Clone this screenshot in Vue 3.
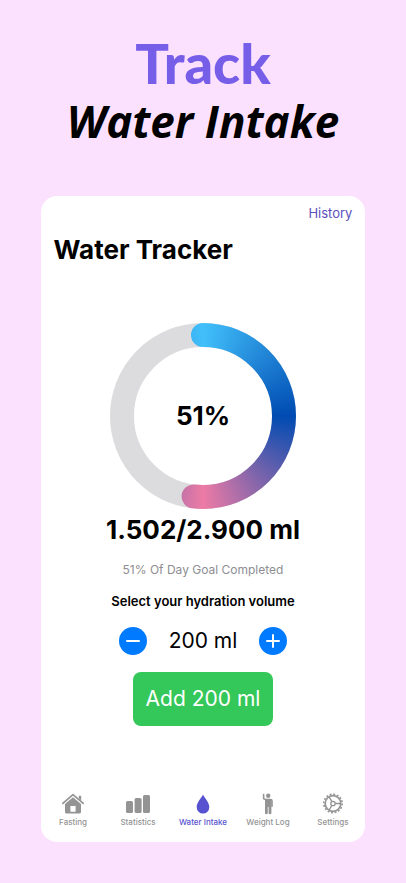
<!-- WaterTracker -->
<template>
  <main class="page">
    <h1 class="headline">
      <span class="headline-top">Track</span>
      <span class="headline-bottom">Water Intake</span>
    </h1>

    <section class="card">
      <header class="card-header">
        <a href="#history" class="history">History</a>
        <h2 class="title">Water Tracker</h2>
      </header>

      <div class="tracker">
        <div class="ring">
          <svg viewBox="0 0 186 186" class="ring-svg" aria-hidden="true">
            <defs>
              <mask id="ring-mask" maskUnits="userSpaceOnUse" x="0" y="0" width="186" height="186">
                <circle
                  cx="93" cy="93" :r="radius" fill="none" stroke="#fff" stroke-width="24"
                  stroke-linecap="round" :stroke-dasharray="dash" transform="rotate(-90 93 93)"
                />
              </mask>
            </defs>
            <circle cx="93" cy="93" :r="radius" fill="none" stroke="#dcdcde" stroke-width="24" />
            <g mask="url(#ring-mask)">
              <foreignObject x="0" y="0" width="186" height="186">
                <div class="ring-color"></div>
              </foreignObject>
            </g>
          </svg>
          <span class="percent">{{ percent }}%</span>
        </div>

        <p class="amount">{{ format(current) }}/{{ format(goal) }} ml</p>
        <p class="completed">{{ percent }}% Of Day Goal Completed</p>
        <p class="select-label">Select your hydration volume</p>

        <div class="stepper">
          <button type="button" class="round" aria-label="Less" @click="decrease">
            <svg viewBox="0 0 28 28"><path d="M8 14h12" /></svg>
          </button>
          <span class="volume">{{ volume }} ml</span>
          <button type="button" class="round" aria-label="More" @click="increase">
            <svg viewBox="0 0 28 28"><path d="M8 14h12M14 8v12" /></svg>
          </button>
        </div>

        <button type="button" class="add" @click="add">Add {{ volume }} ml</button>
      </div>

      <nav class="tabs">
        <a
          v-for="tab in tabs" :key="tab.id" :href="'#' + tab.id"
          class="tab" :class="{ active: tab.id === activeTab }" @click.prevent="activeTab = tab.id"
        >
          <svg v-if="tab.id === 'fasting'" viewBox="0 0 24 22" class="icon">
            <path d="M1.8 10.4 12 1.6l10.2 8.8" fill="none" stroke="currentColor" stroke-width="1.7" stroke-linecap="round" stroke-linejoin="round" />
            <path d="M17.8 2.8h2.4v4.8l-2.4-2z" fill="currentColor" />
            <path fill-rule="evenodd" d="M12 4.2 20 11V19q0 1.6-1.6 1.6H5.6Q4 20.6 4 19v-8zM9.4 13v5.8h5.2V13z" fill="currentColor" />
          </svg>
          <svg v-else-if="tab.id === 'statistics'" viewBox="0 0 24 22" class="icon">
            <rect x="0" y="8" width="7" height="12" rx="1.6" fill="currentColor" />
            <rect x="8.6" y="5" width="7" height="15" rx="1.6" fill="currentColor" />
            <rect x="17" y="2" width="7" height="18" rx="1.6" fill="currentColor" />
          </svg>
          <svg v-else-if="tab.id === 'water'" viewBox="0 0 24 22" class="icon">
            <path d="M12 1.4c1.2 3 6.3 7.4 6.3 12.8a6.3 6.3 0 0 1-12.6 0C5.7 8.8 10.8 4.4 12 1.4z" fill="currentColor" />
          </svg>
          <svg v-else-if="tab.id === 'weight'" viewBox="0 0 24 22" class="icon">
            <circle cx="12.2" cy="2.7" r="2.2" fill="currentColor" />
            <path d="M7.6 1.6v3.6q0 .9 1.3 1.1l1.6.3h4.2q1.3 0 1.3 1.4v5.2" fill="none" stroke="currentColor" stroke-width="1.6" stroke-linecap="round" stroke-linejoin="round" />
            <path d="M9 6h6.4v14.1q0 1.2-1.4 1.2t-1.4-1.2v-6h-.8v6q0 1.2-1.4 1.2T9 20.1z" fill="currentColor" />
          </svg>
          <svg v-else viewBox="0 0 24 22" class="icon">
            <circle cx="12" cy="10.5" r="7.8" fill="none" stroke="currentColor" stroke-width="1.7" />
            <circle cx="12" cy="10.5" r="9.2" fill="none" stroke="currentColor" stroke-width="1.6" stroke-dasharray="1.9 1.713" />
            <circle cx="12" cy="10.5" r="2.2" fill="none" stroke="currentColor" stroke-width="1.3" />
            <path d="M14.2 10.5h5.6M10.9 8.6 8.1 3.8M10.9 12.4l-2.8 4.8" stroke="currentColor" stroke-width="1.3" />
          </svg>
          <span>{{ tab.label }}</span>
        </a>
      </nav>
    </section>
  </main>
</template>

<script setup>
import { ref, computed } from 'vue'

const current = ref(1502)
const goal = 2900
const volume = ref(200)
const activeTab = ref('water')

const tabs = [
  { id: 'fasting', label: 'Fasting' },
  { id: 'statistics', label: 'Statistics' },
  { id: 'water', label: 'Water Intake' },
  { id: 'weight', label: 'Weight Log' },
  { id: 'settings', label: 'Settings' }
]

const radius = 81
const progress = computed(() => Math.min(current.value / goal, 1))
const percent = computed(() => Math.floor(progress.value * 100))
const dash = computed(() => {
  const length = 2 * Math.PI * radius
  return `${length * progress.value} ${length}`
})

const format = (n) => String(n).replace(/\B(?=(\d{3})+$)/g, '.')

const decrease = () => {
  volume.value = Math.max(50, volume.value - 50)
}
const increase = () => {
  volume.value += 50
}
const add = () => {
  current.value += volume.value
}
</script>

<style>
body {
  margin: 0;
  background-color: #fce1ff;
}
</style>

<style scoped>
.page {
  box-sizing: border-box;
  min-height: 100vh;
  padding: 34px 10% 41px;
  display: flex;
  flex-direction: column;
  background-color: #fce1ff;
  font-family: Inter, "Liberation Sans", sans-serif;
  color: #000;
}
h1, h2, p {
  margin: 0;
}
.headline {
  display: flex;
  flex-direction: column;
  align-items: center;
  margin-bottom: 46px;
  white-space: nowrap;
}
.headline-top {
  font-family: Lato, sans-serif;
  font-weight: 900;
  font-size: 56px;
  line-height: 58px;
  color: #775ee8;
}
.headline-bottom {
  font-family: "Open Sans", sans-serif;
  font-weight: 700;
  font-style: italic;
  font-size: 44px;
  line-height: 58px;
}
.card {
  flex: 1;
  display: flex;
  flex-direction: column;
  background-color: #fff;
  border-radius: 16px;
}
.card-header {
  display: flex;
  flex-direction: column;
  padding: 8px 13px 0;
}
.history {
  align-self: flex-end;
  font-size: 13px;
  line-height: 18px;
  color: #5a50bd;
  text-decoration: none;
}
.title {
  margin-top: 11px;
  font-size: 26px;
  line-height: 34px;
  font-weight: 700;
}
.tracker {
  flex: 1;
  display: flex;
  flex-direction: column;
  align-items: center;
  padding-top: 56px;
}
.ring {
  display: grid;
  place-items: center;
  width: 186px;
  height: 186px;
}
.ring-svg, .percent {
  grid-area: 1 / 1;
}
.ring-svg {
  width: 100%;
  height: 100%;
}
.ring-color {
  width: 186px;
  height: 186px;
  background: conic-gradient(#42c0fb, #004bb2 25%, #ed7ba5 50%, #004bb2 75%, #42c0fb);
}
.percent {
  font-size: 26px;
  line-height: 34px;
  font-weight: 700;
}
.amount {
  margin-top: 4px;
  font-size: 26px;
  line-height: 34px;
  font-weight: 700;
}
.completed {
  margin-top: 14px;
  font-size: 12px;
  line-height: 18px;
  color: #8e8e92;
}
.select-label {
  margin-top: 13px;
  font-size: 13px;
  line-height: 18px;
  font-weight: 600;
}
.stepper {
  display: flex;
  align-items: center;
  gap: 22px;
  margin-top: 14px;
}
.round {
  width: 28px;
  height: 28px;
  padding: 0;
  border: none;
  border-radius: 50%;
  background-color: #007aff;
  cursor: pointer;
}
.round svg {
  display: block;
  fill: none;
  stroke: #fff;
  stroke-width: 2;
  stroke-linecap: round;
}
.volume {
  font-size: 21px;
  line-height: 34px;
}
.add {
  margin-top: 14px;
  padding: 10px 13px;
  border: none;
  border-radius: 8px;
  background-color: #34c759;
  color: #fff;
  font-family: inherit;
  font-size: 21px;
  line-height: 34px;
  cursor: pointer;
}
.tabs {
  display: grid;
  grid-template-columns: repeat(5, 1fr);
  padding-bottom: 15px;
}
.tab {
  display: flex;
  flex-direction: column;
  align-items: center;
  gap: 2px;
  font-size: 8px;
  line-height: 10px;
  font-weight: 500;
  color: #949494;
  text-decoration: none;
  white-space: nowrap;
}
.tab.active {
  color: #5753d0;
}
.icon {
  width: 24px;
  height: 22px;
}
</style>
